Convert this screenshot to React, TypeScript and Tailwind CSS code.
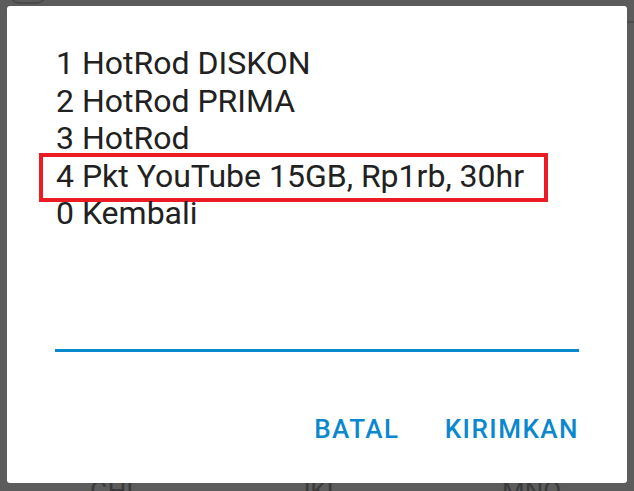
const ITEMS = ["1 HotRod DISKON", "2 HotRod PRIMA", "3 HotRod", "4 Pkt YouTube 15GB, Rp1rb, 30hr", "0 Kembali"];

export default function App() {
  return (
    <div
      className="relative w-[634px] h-[491px] overflow-hidden bg-[#5c5c5c] pt-[6px] pl-[7px]"
      style={{ fontFamily: "Roboto, 'Noto Sans', sans-serif" }}
    >
      {/* ghost keypad behind the dialog */}
      <div className="absolute left-[10px] -top-[14px] w-[36px] h-[18px] rounded-full border-2 border-[#4a4a4a]" />
      <div className="absolute right-0 top-[21px] w-[7px] h-[2px] bg-[#4c4c4c]" />
      <div className="absolute top-[476px] left-0 w-full grid grid-cols-[206px_206px_206px] pl-[90px] text-[26px] leading-[30px] text-[#3a3a3a]">
        <span>GHI</span>
        <span>JKL</span>
        <span>MNO</span>
      </div>

      <div className="relative w-[620px] h-[477px] bg-white rounded-[3px] px-[48px] pt-[39px]">
        <div className="text-[32px] leading-[37.5px] text-[#212121] pl-[1px]">
          {ITEMS.map((t, i) => (
            <div key={t} className="relative whitespace-nowrap">
              {i === 3 && (
                <div className="absolute -left-[17px] -top-[5px] w-[509px] h-[49px] border-4 border-[#ec1c24]" />
              )}
              {t}
            </div>
          ))}
        </div>

        <div className="mt-[116px] h-[3px] w-[524px] bg-[#0a88cf]" />

        <div className="mt-[62px] flex justify-end gap-[45px] text-[26px] leading-[30px] tracking-[1.5px] font-medium text-[#0a88cf]">
          <span>BATAL</span>
          <span>KIRIMKAN</span>
        </div>
      </div>
    </div>
  );
}
